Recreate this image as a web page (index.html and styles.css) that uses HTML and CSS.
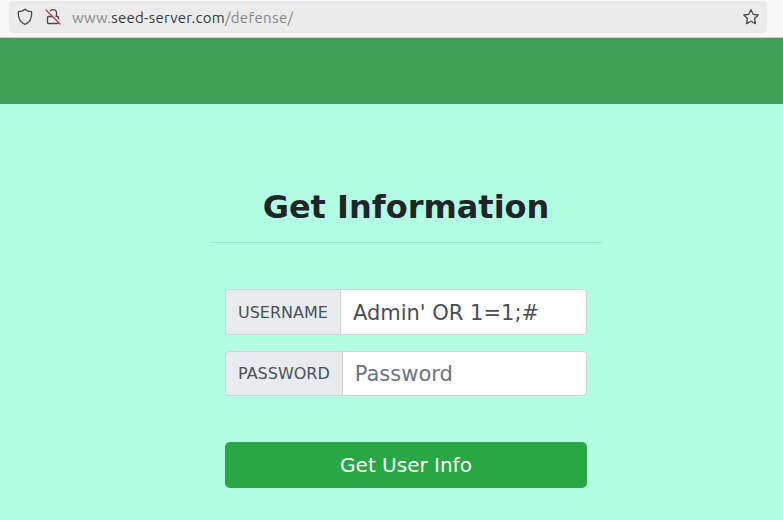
FILE: index.html
```html
<!DOCTYPE html>
<html lang="en">
<head>
<meta charset="utf-8">
<title>Get Information</title>
<link rel="stylesheet" href="styles.css">
</head>
<body>
<header class="toolbar">
  <div class="address">
    <svg class="icon shield" viewBox="0 0 16 18"><path d="M8 1.2C6.4 2.6 4 3.6 1.4 3.7C1 9 3 14.3 8 16.3C13 14.3 15 9 14.6 3.7C12 3.6 9.600 2.600 8 1.200Z"/></svg>
    <svg class="icon lock" viewBox="0 0 16 18"><path d="M3.500 8.500H12.500Q13.500 8.500 13.500 9.500V14.500Q13.500 15.500 12.500 15.500H3.500Q2.500 15.500 2.500 14.500V9.500Q2.500 8.500 3.500 8.500ZM4.500 4.500C5 .5 11.500 .5 11.500 5V8.500"/><path class="slash-gap" d="M2 1.500L15.500 15"/><path class="slash" d="M1 2L15 16"/></svg>
    <div class="url"><span>www.</span><span class="domain">seed-server.com</span><span class="path">/defense/</span></div>
    <svg class="icon star" viewBox="0 0 18 18"><path d="M9 1.800L11.200 6.300L16.200 7L12.600 10.500L13.400 15.600L9 13.200L4.600 15.600L5.400 10.500L1.800 7L6.800 6.300Z"/></svg>
  </div>
</header>
<nav class="navbar"></nav>
<main class="content">
  <h1 class="title">Get Information</h1>
  <hr class="rule">
  <form class="form">
    <div class="group">
      <label class="label" for="username">USERNAME</label>
      <input class="input username" id="username" type="text" value="Admin' OR 1=1;#" spellcheck="false">
    </div>
    <div class="group password">
      <label class="label" for="password">PASSWORD</label>
      <input class="input" id="password" type="password" placeholder="Password">
    </div>
    <button class="submit" type="button">Get User Info</button>
  </form>
</main>
</body>
</html>
```
FILE: styles.css
```css
* { box-sizing: border-box; }
body {
  margin: 0;
  height: 520px;
  overflow: hidden;
  background: #b2fee3;
  color: #212529;
  font-family: "DejaVu Sans", sans-serif;
}
.toolbar {
  height: 38px;
  padding: 1px 16px 0 9px;
  background: #f8f8f8;
  border-bottom: 1px solid #cccccc;
}
.address {
  display: flex;
  align-items: center;
  height: 32px;
  padding: 0 7px 0 8px;
  background: #ebebeb;
  border-radius: 4px;
}
.icon {
  flex: none;
  width: 16px;
  height: 18px;
  fill: none;
  stroke: #4a4a4d;
  stroke-width: 1.3;
  stroke-linejoin: round;
  stroke-linecap: round;
}
.lock { margin-left: 12px; }
.star { width: 18px; }
.slash-gap { stroke: #ebebeb; stroke-width: 2; }
.slash { stroke: #e22850; }
.url {
  flex: 1;
  margin-left: 11px;
  padding-top: 2px;
  color: #868686;
  font: 15px/20px Ubuntu, "Noto Sans", sans-serif;
  letter-spacing: .1px;
  white-space: nowrap;
}
.domain { color: #38383a; letter-spacing: .26px; }
.path { letter-spacing: .35px; }
.navbar { height: 66px; background: #3fa055; }
.content { width: 392px; margin-left: 210px; padding-top: 84px; }
.title {
  margin: 0;
  font-size: 32px;
  line-height: 39px;
  font-weight: 700;
  text-align: center;
}
.rule { margin: 15px 0 0; border: 0; border-top: 1px solid #a0e4cc; }
.form { padding: 46px 15px 0; }
.group { display: flex; height: 46px; }
.password { height: 45px; margin-top: 16px; }
.label {
  display: flex;
  align-items: center;
  padding: 0 12px;
  background: #e9ecef;
  border: 1px solid #ced4da;
  border-right: 0;
  border-radius: 4px 0 0 4px;
  color: #495057;
  font-size: 16px;
}
.input {
  flex: 1;
  min-width: 0;
  padding: 0 12px;
  background: #fff;
  border: 1px solid #ced4da;
  border-radius: 0 4px 4px 0;
  outline: 0;
  color: #495057;
  font: 21px "DejaVu Sans", sans-serif;
}
.username { padding-top: 2px; }
.input::placeholder { color: #6c757d; opacity: 1; }
.submit {
  display: block;
  width: 100%;
  height: 46px;
  margin-top: 46px;
  padding: 0;
  border: 0;
  border-radius: 5px;
  background: #28a745;
  color: #fff;
  font: 20px "DejaVu Sans", sans-serif;
}
```
